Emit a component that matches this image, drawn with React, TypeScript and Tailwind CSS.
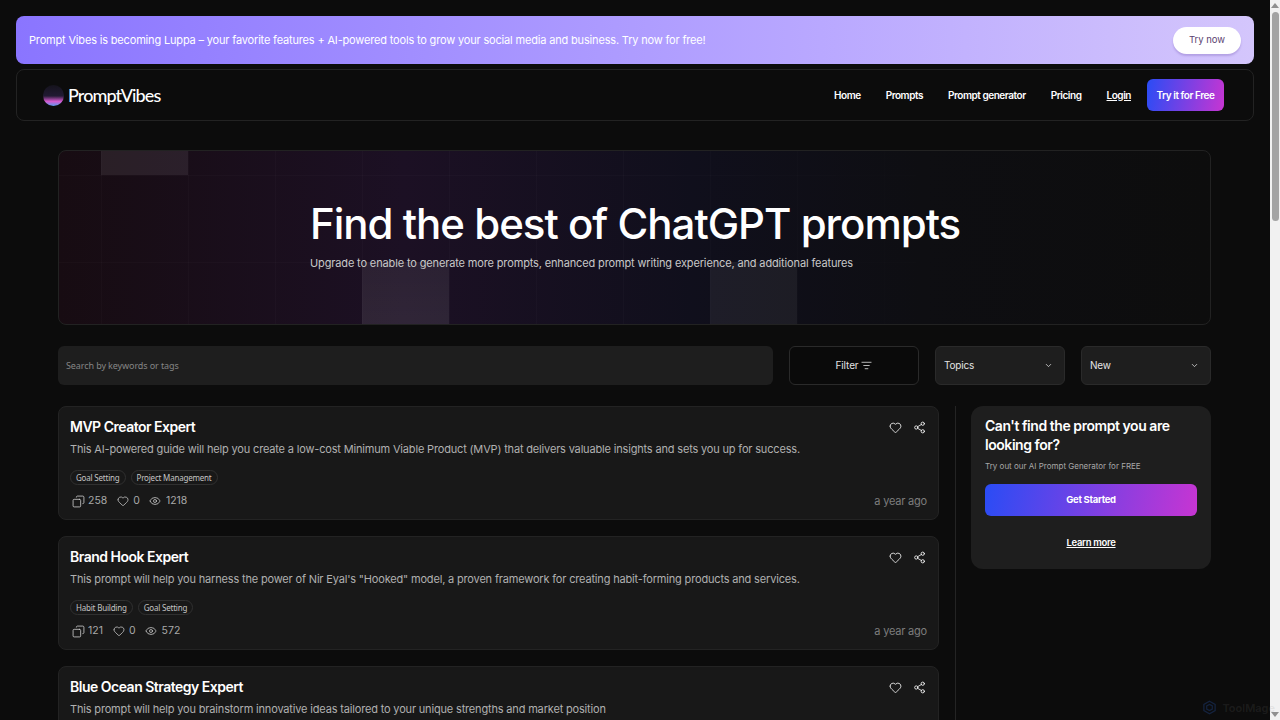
import { ChevronDown, Copy, Eye, Heart, ListFilter, Share2 } from 'lucide-react'

type Prompt = {
  title: string
  desc: string
  stats?: { tags: string[]; copies: number; views: number }
}

const prompts: Prompt[] = [
  {
    title: 'MVP Creator Expert',
    desc: 'This AI-powered guide will help you create a low-cost Minimum Viable Product (MVP) that delivers valuable insights and sets you up for success.',
    stats: { tags: ['Goal Setting', 'Project Management'], copies: 258, views: 1218 },
  },
  {
    title: 'Brand Hook Expert',
    desc: 'This prompt will help you harness the power of Nir Eyal\'s "Hooked" model, a proven framework for creating habit-forming products and services.',
    stats: { tags: ['Habit Building', 'Goal Setting'], copies: 121, views: 572 },
  },
  {
    title: 'Blue Ocean Strategy Expert',
    desc: 'This prompt will help you brainstorm innovative ideas tailored to your unique strengths and market position',
  },
]

function Logo() {
  return (
    <div className="flex items-center gap-[4px]">
      <div className="h-[21px] w-[21px] rounded-full bg-[linear-gradient(180deg,#15131c_0%,#211a33_52%,#d65ad0_78%,#5b9bf0_100%)]" />
      <span className="font-['Lato',sans-serif] text-[18px] font-medium tracking-[-0.9px] text-white">PromptVibes</span>
    </div>
  )
}

function PromptCard({ p }: { p: Prompt }) {
  return (
    <div className="h-[114px] shrink-0 rounded-lg border border-[#232323] bg-[#181818] pl-[11px] pr-[12px] pt-[10px]">
      <div className="flex items-center justify-between">
        <h3 className="text-[14px] leading-[20px] font-semibold tracking-[-0.5px] text-white">{p.title}</h3>
        <div className="flex items-center gap-[11px] text-white">
          <Heart size={13} strokeWidth={1.5} />
          <Share2 size={13} strokeWidth={1.5} />
        </div>
      </div>
      <p className="mt-[2px] text-[11px] leading-[20px] tracking-[-0.17px] text-[#b0b0b0]">{p.desc}</p>
      {p.stats && (
        <>
          <div className="mt-[11px] flex gap-[5px]">
            {p.stats.tags.map((t) => (
              <span key={t} className="flex h-[15px] items-center rounded-full border border-[#303030] px-[5px] font-['Noto_Sans',sans-serif] text-[8px] tracking-[-0.2px] text-[#c4c4c4]">
                {t}
              </span>
            ))}
          </div>
          <div className="mt-[8px] flex items-center justify-between text-[10.5px] leading-[16px] text-[#a8a8a8]">
            <div className="flex items-center">
              <Copy size={13} strokeWidth={1.5} className="ml-[2px] mr-[3px] -scale-x-100 text-[#cfcfcf]" />
              <span>{p.stats.copies}</span>
              <Heart size={12} strokeWidth={1.5} className="ml-[10px] mr-[4px] text-[#cfcfcf]" />
              <span>0</span>
              <Eye size={12} strokeWidth={1.5} className="ml-[9px] mr-[5px] text-[#cfcfcf]" />
              <span>{p.stats.views}</span>
            </div>
            <span className="-mr-[1px] text-[11px] tracking-[-0.2px] text-[#7d7d7d]">a year ago</span>
          </div>
        </>
      )}
    </div>
  )
}

export default function App() {
  return (
    <div className="relative flex h-screen overflow-hidden bg-[#0c0c0c] font-['Inter',sans-serif]">
      <div className="flex-1 overflow-hidden px-[16px] pt-[16px]">
        <div className="flex h-[48px] items-center justify-between rounded-lg bg-[linear-gradient(90deg,#8a75ff_0%,#b9a8ff_65%,#d4c6fc_100%)] pl-[13px] pr-[13px]">
          <span className="text-[11px] tracking-[-0.17px] text-white">
            Prompt Vibes is becoming Luppa – your favorite features + AI-powered tools to grow your social media and business. Try now for free!
          </span>
          <button className="h-[27px] w-[68px] rounded-full bg-white text-[9.5px] text-[#5a3f70] shadow-[0_2px_2px_rgba(90,60,160,0.25)]">Try now</button>
        </div>

        <nav className="mt-[5px] flex h-[52px] items-center justify-between rounded-lg border border-[#232323] pl-[26px] pr-[29px]">
          <Logo />
          <div className="flex items-center text-[10px] font-semibold tracking-[-0.45px] text-white">
            <a className="mr-[25px]">Home</a>
            <a className="mr-[25px]">Prompts</a>
            <a className="mr-[25px]">Prompt generator</a>
            <a className="mr-[25px]">Pricing</a>
            <a className="mr-[16px] underline">Login</a>
            <button className="h-[32px] w-[77px] rounded-md bg-[linear-gradient(100deg,#2a4cf5_0%,#c735d2_100%)] font-semibold">Try it for Free</button>
          </div>
        </nav>

        <div className="ml-[42px] mr-[43px] mt-[29px]">
          <section className="relative h-[175px] overflow-hidden rounded-lg border border-[#222] bg-[linear-gradient(90deg,#170c12_0%,#1c1024_30%,#100f1c_55%,#0e0e12_75%,#0d0d0d_100%)]">
            <div className="absolute inset-0 bg-[linear-gradient(rgba(255,255,255,0.02)_1px,transparent_1px),linear-gradient(90deg,rgba(255,255,255,0.02)_1px,transparent_1px)] bg-[size:87px_87px] bg-[position:42px_24px] [mask-image:linear-gradient(90deg,black_50%,transparent_85%)]" />
            <div className="absolute left-[42px] top-0 h-[24px] w-[87px] bg-white/8" />
            <div className="absolute left-[303px] top-[111px] h-[63px] w-[87px] bg-[linear-gradient(180deg,rgba(255,255,255,0.07),rgba(255,255,255,0.09))]" />
            <div className="absolute left-[651px] top-[111px] h-[63px] w-[87px] bg-white/6" />
            <div className="relative pl-[251px] pt-[45px]">
              <h1 className="text-[42px] leading-[56px] font-medium tracking-[-1px] text-white">Find the best of ChatGPT prompts</h1>
              <p className="mt-[2px] text-[11px] leading-[18px] tracking-[-0.14px] text-[#c8c8c8]">
                Upgrade to enable to generate more prompts, enhanced prompt writing experience, and additional features
              </p>
            </div>
          </section>

          <div className="mt-[21px] flex h-[39px] gap-[16px]">
            <div className="flex flex-1 items-center rounded-md bg-[#1e1e1e] pl-[8px] pt-[1px] font-['Noto_Sans',sans-serif] text-[9px] tracking-[-0.1px] text-[#858585]">
              Search by keywords or tags
            </div>
            <button className="flex w-[130px] items-center justify-center gap-[2px] rounded-md border border-[#2a2a2a] bg-[#0a0a0a] pr-[1px] text-[10px] tracking-[-0.1px] text-[#e4e4e4]">
              Filter <ListFilter size={11} strokeWidth={1.75} />
            </button>
            <div className="flex w-[130px] items-center justify-between rounded-md border border-[#2a2a2a] bg-[#1e1e1e] pl-[8px] pr-[11px] text-[10px] tracking-[-0.2px] text-[#e4e4e4]">
              Topics <ChevronDown size={9} />
            </div>
            <div className="flex w-[130px] items-center justify-between rounded-md border border-[#2a2a2a] bg-[#1e1e1e] pl-[8px] pr-[11px] text-[10px] tracking-[-0.2px] text-[#e4e4e4]">
              New <ChevronDown size={9} />
            </div>
          </div>

          <div className="mt-[21px] flex">
            <div className="flex w-[881px] shrink-0 flex-col gap-[16px]">
              {prompts.map((p) => (
                <PromptCard key={p.title} p={p} />
              ))}
            </div>
            <div className="ml-[16px] w-px self-stretch bg-[#242424]" />
            <aside className="ml-[15px] h-[163px] w-[240px] rounded-xl bg-[#1e1e1e] px-[14px] pt-[10px]">
              <h2 className="text-[14px] leading-[19px] font-semibold tracking-[-0.45px] text-white">Can't find the prompt you are looking for?</h2>
              <p className="mt-[6px] text-[8px] leading-[12px] text-[#a8a8a8]">Try out our AI Prompt Generator for FREE</p>
              <button className="mt-[12px] h-[32px] w-full rounded-md bg-[linear-gradient(100deg,#2a4cf5_0%,#c735d2_100%)] pt-[1px] text-[9.5px] font-bold tracking-[-0.3px] text-white">Get Started</button>
              <div className="mt-[20px] text-center text-[9.5px] font-semibold tracking-[-0.3px] text-white underline">Learn more</div>
            </aside>
          </div>
        </div>
      </div>

      <div className="flex w-[10px] shrink-0 flex-col items-center justify-between bg-[#f1f1f1] py-[3px]">
        <div className="h-0 w-0 border-x-[4px] border-b-[5px] border-x-transparent border-b-[#8f8f8f]" />
        <div className="mb-auto mt-[4px] h-[209px] w-[7px] rounded-sm bg-[#a3a3a3]" />
        <div className="h-0 w-0 border-x-[4px] border-t-[5px] border-x-transparent border-t-[#8f8f8f]" />
      </div>

      <div className="absolute bottom-[4px] right-[5px] flex items-center gap-[5px] text-[11px] font-semibold text-[#808080]/15">
        <svg width="15" height="15" viewBox="0 0 24 24" fill="none" stroke="#14233f" strokeWidth="2">
          <path d="M12 2 21 7v10l-9 5-9-5V7z" />
          <path d="M12 7l4.5 2.5v5L12 17l-4.5-2.5v-5z" />
        </svg>
        ToolMage
      </div>
    </div>
  )
}
